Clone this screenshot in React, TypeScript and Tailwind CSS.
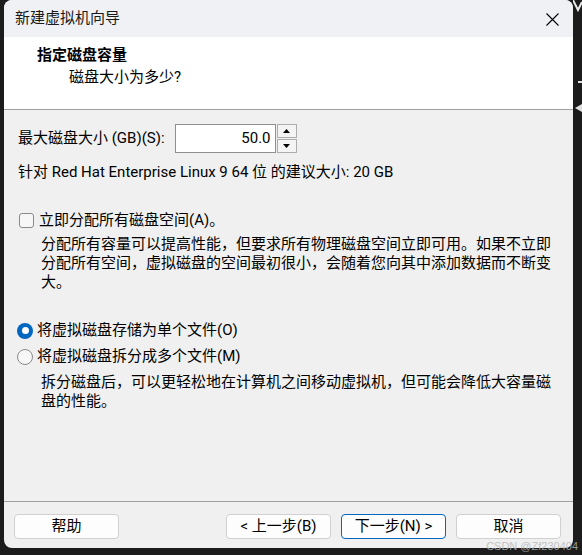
import React from "react"

const font = "font-['Roboto','Noto_Sans_CJK_SC',sans-serif]"

function Spin() {
  return (
    <div className="flex h-[29px] ml-[10px]">
      <div className="w-[101px] h-full bg-white border border-[#8f8f8f] flex items-center justify-end pr-[4px] text-[15px]">50.0</div>
      <div className="w-[20px] h-full flex flex-col gap-px ml-px">
        <div className="flex-1 border border-[#adadad] bg-[#f4f4f4] flex items-center justify-center">
          <svg width="7" height="4" viewBox="0 0 7 4"><path d="M3.5 0L7 4H0z" fill="#000" /></svg>
        </div>
        <div className="flex-1 border border-[#adadad] bg-[#f4f4f4] flex items-center justify-center">
          <svg width="7" height="4" viewBox="0 0 7 4"><path d="M0 0h7L3.5 4z" fill="#000" /></svg>
        </div>
      </div>
    </div>
  )
}

function Radio({ on }: { on?: boolean }) {
  return on ? (
    <span className="w-[16px] h-[16px] rounded-full bg-[#0067c0] flex items-center justify-center shrink-0">
      <span className="w-[7px] h-[7px] rounded-full bg-white" />
    </span>
  ) : (
    <span className="w-[16px] h-[16px] rounded-full border border-[#8a8a8a] bg-[#f7f7f7] shrink-0" />
  )
}

function Btn({ label, primary }: { label: string; primary?: boolean }) {
  return (
    <div className={`w-[105px] h-[25px] rounded-[4px] bg-[#fdfdfd] border flex items-center justify-center text-[15px] ${primary ? "border-[#0067c0]" : "border-[#d0d0d0]"}`}>
      {label}
    </div>
  )
}

export default function App() {
  return (
    <div className={`relative w-[582px] h-[555px] bg-[#1c1c1c] pl-[4px] overflow-hidden ${font} text-black`}>
      <div className="w-[569px] h-[548px] rounded-[8px] overflow-hidden flex flex-col bg-[#f0f0f0]">
        {/* title bar */}
        <div className="h-[37px] bg-[#eff1f4] flex items-center justify-between pl-[11px] pr-[14px]">
          <span className="text-[15px] text-[#1a1a1a]">新建虚拟机向导</span>
          <svg width="13" height="13" viewBox="0 0 13 13" className="mt-[2px]">
            <path d="M0.5 0.5l12 12M12.5 0.5l-12 12" stroke="#000" strokeWidth="1.1" />
          </svg>
        </div>

        {/* header */}
        <div className="h-[73px] bg-white border-b border-[#a0a0a0] pt-[8px] leading-[20px]">
          <div className="pl-[33px] text-[15px] font-bold">指定磁盘容量</div>
          <div className="pl-[65px] text-[15px] mt-[2px]">磁盘大小为多少?</div>
        </div>

        {/* body */}
        <div className="flex-1 pl-[14px] pr-[14px] text-[15px] leading-[19px]">
          <div className="flex items-center mt-[14px]">
            <span>最大磁盘大小 (GB)(S):</span>
            <Spin />
          </div>
          <div className="mt-[10px]">针对 Red Hat Enterprise Linux 9 64 位 的建议大小: 20 GB</div>

          <div className="flex items-center gap-[5px] mt-[29px] pl-px">
            <span className="w-[15px] h-[15px] rounded-[3px] border border-[#8a8a8a] bg-[#f7f7f7] shrink-0" />
            <span>立即分配所有磁盘空间(A)。</span>
          </div>
          <div className="mt-[5px] pl-[23px] pr-[6px]">
            分配所有容量可以提高性能，但要求所有物理磁盘空间立即可用。如果不立即分配所有空间，虚拟磁盘的空间最初很小，会随着您向其中添加数据而不断变大。
          </div>

          <div className="flex items-center gap-[4px] mt-[29px] -ml-px">
            <Radio on />
            <span>将虚拟磁盘存储为单个文件(O)</span>
          </div>
          <div className="flex items-center gap-[4px] mt-[7px] -ml-px">
            <Radio />
            <span>将虚拟磁盘拆分成多个文件(M)</span>
          </div>
          <div className="mt-[7px] pl-[23px] pr-[6px]">
            拆分磁盘后，可以更轻松地在计算机之间移动虚拟机，但可能会降低大容量磁盘的性能。
          </div>
        </div>

        {/* footer */}
        <div className="h-[47px] border-t border-[#a0a0a0] flex items-start pt-[12px] pl-[10px] pr-[12px]">
          <Btn label="帮助" />
          <div className="flex-1" />
          <div className="flex gap-[10px]">
            <Btn label="< 上一步(B)" />
            <Btn label="下一步(N) >" primary />
            <Btn label="取消" />
          </div>
        </div>
      </div>

      {/* desktop bits behind the window */}
      <svg className="absolute left-[573px] top-0" width="9" height="12" viewBox="0 0 9 12">
        <path d="M0 0l5 10L9 2" stroke="#e8e8e8" strokeWidth="2" fill="none" />
      </svg>
      <div className="absolute left-[578px] top-[81px] w-[4px] h-[2px] bg-[#e0e0e0]" />
      <svg className="absolute left-[575px] top-[104px]" width="7" height="8" viewBox="0 0 7 8">
        <path d="M0 4L7 0v8z" fill="#e0e0e0" />
      </svg>

      {/* watermark */}
      <div className="absolute right-[4px] bottom-[1px] text-[11px] text-[#b8b8b8] opacity-80 font-['Liberation_Sans',sans-serif]">CSDN @Zf230404</div>
    </div>
  )
}
